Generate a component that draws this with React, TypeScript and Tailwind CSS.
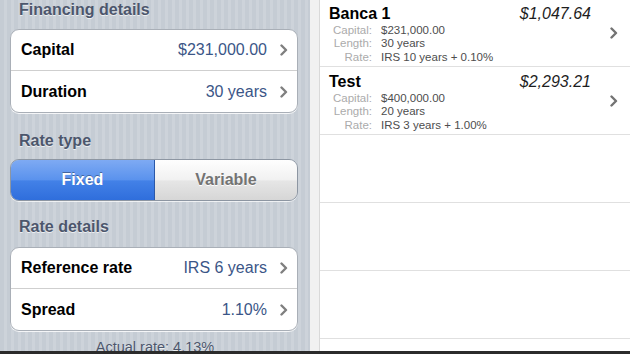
const font = { fontFamily: '"Liberation Sans", Arial, sans-serif' }

function Chevron({ className = '' }: { className?: string }) {
  return (
    <svg width="8" height="12" viewBox="0 0 8 12" className={className}>
      <polyline points="1.5,1.5 6,6 1.5,10.5" fill="none" stroke="currentColor" strokeWidth="2.4" strokeLinecap="round" strokeLinejoin="round" />
    </svg>
  )
}

function SectionTitle({ children, className = '' }: { children: string; className?: string }) {
  return (
    <div className={`pl-[9px] text-[16px] leading-[20px] font-bold text-[#4c566c] [text-shadow:0_1px_0_rgba(255,255,255,0.7)] ${className}`}>
      {children}
    </div>
  )
}

function CardRow({ label, value, last }: { label: string; value: string; last?: boolean }) {
  return (
    <div className={`flex h-[41px] items-center pl-[10px] pr-[9px] ${last ? '' : 'border-b border-[#cfcfcf]'}`}>
      <span className="text-[16px] font-bold text-black">{label}</span>
      <span className="ml-auto text-[16px] text-[#3b5687]">{value}</span>
      <Chevron className="ml-[13px] text-[#7f7f7f]" />
    </div>
  )
}

function Card({ rows }: { rows: [string, string][] }) {
  return (
    <div className="overflow-hidden rounded-[9px] border border-[#a9afb7] bg-white shadow-[0_1px_0_rgba(255,255,255,0.8)]">
      {rows.map(([l, v], i) => (
        <CardRow key={l} label={l} value={v} last={i === rows.length - 1} />
      ))}
    </div>
  )
}

const loans = [
  { name: 'Banca 1', amount: '$1,047.64', capital: '$231,000.00', length: '30 years', rate: 'IRS 10 years + 0.10%' },
  { name: 'Test', amount: '$2,293.21', capital: '$400,000.00', length: '20 years', rate: 'IRS 3 years + 1.00%' },
]

function Detail({ label, value }: { label: string; value: string }) {
  return (
    <div className="flex text-[11.5px] leading-[13.6px]">
      <span className="w-[43px] text-right text-[#ababab]">{label}</span>
      <span className="ml-[9px] text-[#4d4d4d]">{value}</span>
    </div>
  )
}

export default function App() {
  return (
    <div className="flex h-[354px] w-[630px] flex-col overflow-hidden bg-white" style={font}>
      <div className="flex h-[351px] shrink-0 overflow-hidden">
        {/* settings side */}
        <div className="w-[310px] overflow-hidden px-[10px] bg-[repeating-linear-gradient(90deg,#c5ccd4_0px,#c5ccd4_4px,#cdd3da_4px,#cdd3da_7px)]">
          <SectionTitle>Financing details</SectionTitle>
          <div className="mt-[9px] mr-[2px]">
            <Card rows={[['Capital', '$231,000.00'], ['Duration', '30 years']]} />
          </div>
          <SectionTitle className="mt-[18px]">Rate type</SectionTitle>
          <div className="mt-[8px] mr-[2px] flex h-[42px] overflow-hidden rounded-[9px] border border-[#8d96a2] shadow-[0_1px_0_rgba(255,255,255,0.7)]">
            <div className="flex w-[144px] items-center justify-center border-r border-[#2b58a8] bg-[linear-gradient(#7eaaf3,#5a92ed_50%,#4381e7_52%,#2f6edc)] text-[16px] font-bold text-white [text-shadow:0_-1px_0_rgba(0,0,0,0.35)]">
              Fixed
            </div>
            <div className="flex flex-1 items-center justify-center bg-[linear-gradient(#fefefe,#f1f1f1_50%,#e6e6e6_52%,#d6d6d6)] text-[16px] font-bold text-[#737373] [text-shadow:0_1px_0_#fff]">
              Variable
            </div>
          </div>
          <SectionTitle className="mt-[16px]">Rate details</SectionTitle>
          <div className="mt-[10px] mr-[2px]">
            <Card rows={[['Reference rate', 'IRS 6 years'], ['Spread', '1.10%']]} />
          </div>
          <div className="mt-[7px] text-center text-[14.5px] leading-[18px] text-[#4c566c] [text-shadow:0_1px_0_rgba(255,255,255,0.7)]">
            Actual rate: 4.13%
          </div>
        </div>
        <div className="w-[10px] border-r border-[#d9d9d9] bg-[#f1f1f1]" />
        {/* loans list */}
        <div className="flex-1 overflow-hidden">
          <div className="-mt-[1px]">
            {loans.map((l) => (
              <div key={l.name} className="flex h-[68px] border-b border-[#e0e0e0] pt-[4.5px] pl-[9px] pr-[12px]">
                <div className="flex-1">
                  <div className="flex text-[16px] leading-[20px]">
                    <span className="font-bold text-black">{l.name}</span>
                    <span className="ml-auto italic text-[#1e1e1e]">{l.amount}</span>
                  </div>
                  <Detail label="Capital:" value={l.capital} />
                  <Detail label="Length:" value={l.length} />
                  <Detail label="Rate:" value={l.rate} />
                </div>
                <div className="ml-[19px] flex items-center pb-[4px]">
                  <Chevron className="text-[#737373]" />
                </div>
              </div>
            ))}
            {[0, 1, 2].map((i) => (
              <div key={i} className="h-[68px] border-b border-[#e0e0e0]" />
            ))}
          </div>
        </div>
      </div>
      <div className="h-[3px] shrink-0 bg-[#2b2b2b]" />
    </div>
  )
}
